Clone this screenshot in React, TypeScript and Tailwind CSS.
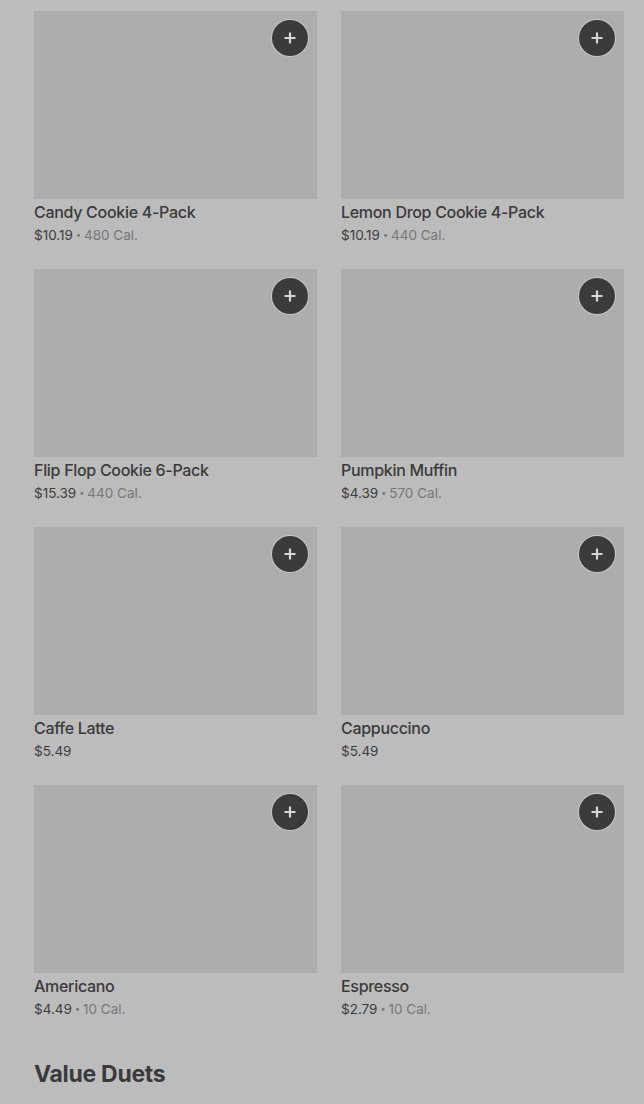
const ITEMS = [
  { name: 'Candy Cookie 4-Pack', price: '$10.19', cal: '480 Cal.' },
  { name: 'Lemon Drop Cookie 4-Pack', price: '$10.19', cal: '440 Cal.' },
  { name: 'Flip Flop Cookie 6-Pack', price: '$15.39', cal: '440 Cal.' },
  { name: 'Pumpkin Muffin', price: '$4.39', cal: '570 Cal.' },
  { name: 'Caffe Latte', price: '$5.49' },
  { name: 'Cappuccino', price: '$5.49' },
  { name: 'Americano', price: '$4.49', cal: '10 Cal.' },
  { name: 'Espresso', price: '$2.79', cal: '10 Cal.' },
];

function PlusButton() {
  return (
    <button className="absolute right-[9px] top-[9px] flex h-9 w-9 items-center justify-center rounded-full bg-[#3b3b3b] ring-1 ring-[#c8c8c8]">
      <svg width="14" height="14" viewBox="0 0 14 14" fill="none">
        <path d="M7 1.5v11M1.5 7h11" stroke="#d6d6d6" strokeWidth="2.2" />
      </svg>
    </button>
  );
}

export default function App() {
  return (
    <div
      className="min-h-[1104px] bg-[#bcbcbc] pl-[34px] pr-[20px] pt-[11px]"
      style={{ fontFamily: 'Inter, "Noto Sans", sans-serif' }}
    >
      <div className="grid grid-cols-2 gap-x-6 gap-y-6">
        {ITEMS.map((item) => (
          <div key={item.name}>
            <div className="relative h-[188px] bg-[#adadad]">
              <PlusButton />
            </div>
            <div className="mt-[3px] text-[16px] font-medium leading-5 tracking-[-0.3px] text-[#3a3a3a]">
              {item.name}
            </div>
            <div className="mt-[3px] flex items-center text-[13.5px] leading-5">
              <span className="text-[#3d3d3d]">{item.price}</span>
              {item.cal && (
                <>
                  <span className="mx-[3px] text-[9px] text-[#777777]">•</span>
                  <span className="text-[#777777]">{item.cal}</span>
                </>
              )}
            </div>
          </div>
        ))}
      </div>
      <h2 className="mt-[39px] text-[23px] font-bold leading-8 tracking-[-0.3px] text-[#3a3a3a]">
        Value Duets
      </h2>
    </div>
  );
}
